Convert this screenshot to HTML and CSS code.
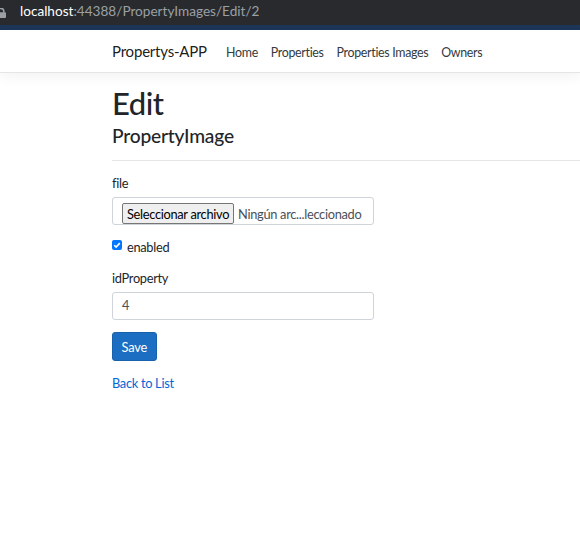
FILE: index.html
```html
<!DOCTYPE html>
<html lang="es">
<head>
<meta charset="utf-8">
<title>Edit - Propertys-APP</title>
<link rel="stylesheet" href="styles.css">
</head>
<body>
<div class="urlbar">
  <svg class="lock" width="6" height="10" viewBox="4 0 6 10" aria-hidden="true">
    <path d="M2.2 4.5V3.2a2.8 2.8 0 0 1 5.6 0v1.3" fill="none" stroke="#9aa0a6" stroke-width="1.6"/>
    <rect x="0" y="4.2" width="10" height="5.8" rx="1" fill="#9aa0a6"/>
  </svg>
  <span class="url"><span class="host">localhost</span><span class="path">:44388/PropertyImages/Edit/2</span></span>
</div>
<div class="accent"></div>
<header class="navbar">
  <div class="container nav-inner">
    <a class="brand" href="#">Propertys-APP</a>
    <nav class="links">
      <a href="#">Home</a>
      <a href="#">Properties</a>
      <a href="#">Properties Images</a>
      <a href="#">Owners</a>
    </nav>
  </div>
</header>
<main class="container">
  <h1 class="title">Edit</h1>
  <h4 class="subtitle">PropertyImage</h4>
  <hr class="rule">
  <div class="col">
    <form class="form">
      <div class="group">
        <label class="label">file</label>
        <div class="file-input">
          <span class="file-btn">Seleccionar archivo</span>
          <span class="file-name">Ningún arc...leccionado</span>
        </div>
      </div>
      <div class="check">
        <span class="box">
          <svg width="10" height="10" viewBox="0 0 10 10" aria-hidden="true"><path d="M2.2 5.2l1.9 1.9 3.7-4" fill="none" stroke="#fff" stroke-width="1.6"/></svg>
        </span>
        <label class="check-label">enabled</label>
      </div>
      <div class="group group-id">
        <label class="label">idProperty</label>
        <div class="input">4</div>
      </div>
      <div class="group group-btn">
        <button type="button" class="btn">Save</button>
      </div>
    </form>
  </div>
  <div class="back"><a href="#">Back to List</a></div>
</main>
</body>
</html>
```

FILE: styles.css
```css
* { box-sizing: border-box; }
html, body { margin: 0; padding: 0; }
body {
  font-family: Lato, "Noto Sans", sans-serif;
  color: #212529;
  background: #fff;
  font-size: 12.8px;
  line-height: 19px;
  letter-spacing: -0.3px;
}
a { text-decoration: none; }

.urlbar {
  height: 25px;
  background: #292a2d;
  display: flex;
  align-items: flex-start;
  font-size: 13.6px;
  line-height: 16px;
  letter-spacing: 0;
}
.lock { margin-top: 8px; margin-right: 14px; flex: none; }
.url { margin-top: 3px; white-space: nowrap; }
.host { color: #ffffff; }
.path { color: #9aa0a6; }
.accent { height: 5px; background: #1d3658; }

.navbar {
  height: 43px;
  background: #fff;
  border-bottom: 1px solid #e5e5e5;
  box-shadow: 0 4px 12px rgba(0,0,0,.05);
}
.container { padding-left: 112px; }
.nav-inner {
  display: flex;
  align-items: baseline;
  padding-top: 11px;
  line-height: 20px;
}
.brand {
  font-size: 15px;
  letter-spacing: -0.2px;
  color: rgba(0,0,0,.9);
  margin-right: 12.8px;
}
.links { display: flex; }
.links a {
  font-size: 12.4px;
  letter-spacing: -0.3px;
  color: #343a40;
  padding: 0 6.4px;
}

.title {
  margin: 11px 0 2px;
  font-size: 31px;
  letter-spacing: -0.5px;
  line-height: 38px;
  font-weight: 500;
}
.subtitle {
  margin: 0;
  font-size: 19.2px;
  letter-spacing: -0.2px;
  line-height: 24px;
  font-weight: 500;
}
.rule {
  margin: 12px 0 0;
  border: 0;
  height: 0;
  border-top: 1px solid rgba(0,0,0,.1);
}

.col { width: 262px; }
.form { margin: 0; }
.group { margin-top: 11px; }
.label { display: block; padding-top: 2px; margin-bottom: 4px; }

.file-input {
  height: 28px;
  border: 1px solid #ced4da;
  border-radius: 3px;
  padding: 5px 9px 0;
  display: flex;
  align-items: flex-start;
  white-space: nowrap;
  overflow: hidden;
}
.file-btn {
  height: 21px;
  background: #efefef;
  border: 1px solid #767676;
  border-radius: 2px;
  padding: 0 4px;
  color: #000;
  line-height: 20px;
}
.file-name {
  margin-left: 4px;
  line-height: 22px;
  color: #495057;
}

.check {
  margin-top: 12px;
  height: 19px;
  display: flex;
  align-items: flex-start;
}
.box {
  width: 10px;
  height: 10px;
  margin-top: 3px;
  margin-right: 5px;
  background: #0075ff;
  border-radius: 2px;
  display: flex;
}
.check-label { line-height: 19px; padding-top: 1px; }

.input {
  height: 28px;
  border: 1px solid #ced4da;
  border-radius: 3px;
  padding: 0 9px;
  line-height: 25px;
  color: #495057;
}

.group-btn { margin-top: 12px; }
.btn {
  height: 29px;
  padding: 0 8.6px;
  background: #1b6ec2;
  border: 1px solid #1861ac;
  border-radius: 3px;
  color: #fff;
  font-family: inherit;
  font-size: 12.8px;
  letter-spacing: -0.2px;
  line-height: 28px;
}

.back { margin-top: 12px; line-height: 20px; }
.back a { color: #0366d6; }
```
